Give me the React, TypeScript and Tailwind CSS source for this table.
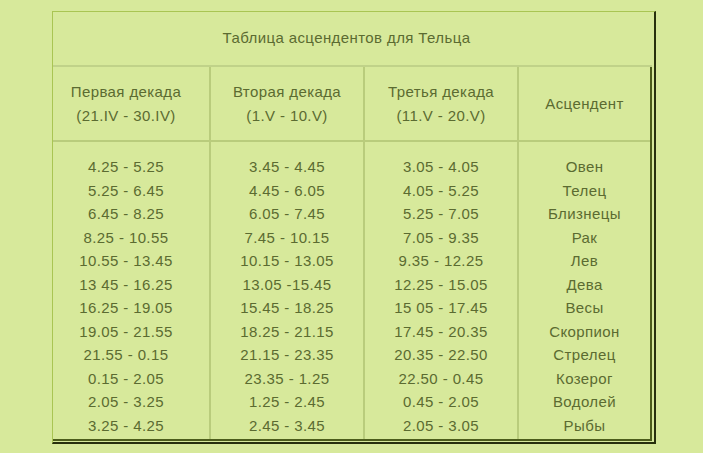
import React from 'react';

const rows: [string, string, string, string][] = [
  ['4.25 - 5.25', '3.45 - 4.45', '3.05 - 4.05', 'Овен'],
  ['5.25 - 6.45', '4.45 - 6.05', '4.05 - 5.25', 'Телец'],
  ['6.45 - 8.25', '6.05 - 7.45', '5.25 - 7.05', 'Близнецы'],
  ['8.25 - 10.55', '7.45 - 10.15', '7.05 - 9.35', 'Рак'],
  ['10.55 - 13.45', '10.15 - 13.05', '9.35 - 12.25', 'Лев'],
  ['13 45 - 16.25', '13.05 -15.45', '12.25 - 15.05', 'Дева'],
  ['16.25 - 19.05', '15.45 - 18.25', '15 05 - 17.45', 'Весы'],
  ['19.05 - 21.55', '18.25 - 21.15', '17.45 - 20.35', 'Скорпион'],
  ['21.55 - 0.15', '21.15 - 23.35', '20.35 - 22.50', 'Стрелец'],
  ['0.15 - 2.05', '23.35 - 1.25', '22.50 - 0.45', 'Козерог'],
  ['2.05 - 3.25', '1.25 - 2.45', '0.45 - 2.05', 'Водолей'],
  ['3.25 - 4.25', '2.45 - 3.45', '2.05 - 3.05', 'Рыбы'],
];

function Column({ items, className = '' }: { items: string[]; className?: string }) {
  return (
    <div className={`flex flex-col items-center pt-[13px] pb-[2px] ${className}`}>
      {items.map((t, i) => (
        <div key={i} className="h-[23.5px] leading-[23.5px] whitespace-nowrap">
          {t}
        </div>
      ))}
    </div>
  );
}

export default function App() {
  const col = (n: number) => rows.map((r) => r[n]);

  return (
    <div
      className="w-[703px] h-[453px] bg-[#d7e99b] pt-[11px] pl-[52px] text-[15px] tracking-[0.4px] text-[#5b6b31]"
      style={{ fontFamily: '"Liberation Sans", Arial, sans-serif' }}
    >
      {/* outer table */}
      <div className="w-[604px] border-l border-t border-[#a9c553] border-r-2 border-b-2 border-r-[#27300d] border-b-[#27300d] pr-[2px] pb-px">
        {/* caption */}
        <div className="h-[55px] flex items-center justify-center pr-[12px] border-b-2 border-[#c0d289]">
          Таблица асцендентов для Тельца
        </div>

        {/* inner table */}
        <div className="border-r-2 border-b-2 border-[#4c5d1b]">
          <div className="grid grid-cols-[158px_154px_154px_1fr] h-[75px] border-b-2 border-[#b9cc7c] leading-[24px]">
            <div className="flex flex-col items-center justify-center pr-[10px] border-r-2 border-[#b9cc7c]">
              <span>Первая декада</span>
              <span>(21.IV - 30.IV)</span>
            </div>
            <div className="flex flex-col items-center justify-center border-r-2 border-[#b9cc7c]">
              <span>Вторая декада</span>
              <span>(1.V - 10.V)</span>
            </div>
            <div className="flex flex-col items-center justify-center border-r-2 border-[#b9cc7c]">
              <span>Третья декада</span>
              <span>(11.V - 20.V)</span>
            </div>
            <div className="flex items-center justify-center">Асцендент</div>
          </div>

          <div className="grid grid-cols-[158px_154px_154px_1fr]">
            <Column items={col(0)} className="pr-[10px] border-r-2 border-[#b9cc7c]" />
            <Column items={col(1)} className="border-r-2 border-[#b9cc7c]" />
            <Column items={col(2)} className="border-r-2 border-[#b9cc7c]" />
            <Column items={col(3)} />
          </div>
        </div>
      </div>
    </div>
  );
}
